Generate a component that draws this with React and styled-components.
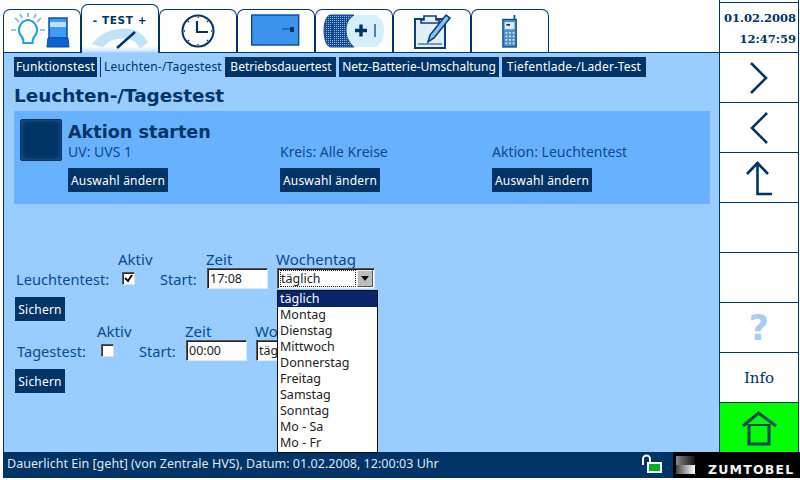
import React from "react";
import styled, { createGlobalStyle } from "styled-components";

const Global = createGlobalStyle`
  html, body { margin: 0; padding: 0; background: #fff; }
  body { font-family: "Noto Sans", "DejaVu Sans", sans-serif; }
`;
const Screen = styled.div`
  width: 800px; height: 480px; display: grid; grid-template-columns: 719px 80px; grid-template-rows: 452px 26px;
  background: #fff; overflow: hidden; position: relative;
`;
const Left = styled.div`display: flex; flex-direction: column; height: 452px; min-width: 0;`;
const TabBar = styled.div`display: flex; align-items: flex-end; height: 52px; padding-left: 3px; box-sizing: border-box;`;
const Tab = styled.div`
  width: 78px; height: ${p => (p.$active ? 49 : 43)}px; box-sizing: border-box; flex: none;
  border: 1px solid #003366; border-bottom: 0; border-radius: 7px 7px 0 0;
  display: flex; align-items: center; justify-content: center;
  background: ${p => (p.$active ? "linear-gradient(#fff 86%, #cfe6ff 96%, #99ccff)" : "#fff")};
  position: relative; z-index: 1;
  margin-bottom: ${p => (p.$active ? -1 : 0)}px;
`;
const Main = styled.main`
  flex: 1; background: #99ccff; margin-left: 3px; border-left: 1px solid #003366; border-top: 1px solid #003366;
  padding: 4px 9px 0 10px; box-sizing: border-box; position: relative;
`;
const SubTabs = styled.div`display: flex; height: 20px;`;
const SubTab = styled.div`
  width: ${p => p.$w}px; margin-right: ${p => p.$gap ?? 3}px; flex: none; text-align: center;
  height: 20px; line-height: 19px; box-sizing: border-box; font-size: 12px; white-space: nowrap;
  letter-spacing: ${p => p.$ls ?? 0.2}px;
  background: ${p => (p.$active ? "transparent" : "#003366")};
  color: ${p => (p.$active ? "#003366" : "#fff")};
  ${p => p.$active && "border: 1px solid #003366; border-bottom: 0; border-top: 0;"}
`;
const Title = styled.h1`
  margin: 7px 0 0; font: bold 18.4px/23px "DejaVu Sans", sans-serif; color: #003366; height: 27px;
`;
const Panel = styled.section`
  background: #66b2ff; width: 696px; height: 93px; padding: 8px 6px 0; box-sizing: border-box; display: flex;
`;
const BigButton = styled.div`
  width: 42px; height: 42px; flex: none; box-sizing: border-box; border: 1px solid #003366; border-radius: 2px;
  background: #003366; box-shadow: inset 0 0 5px #2f6298;
  margin-right: 6px;
`;
const PanelBody = styled.div`flex: 1; display: flex; flex-direction: column;`;
const PanelTitle = styled.div`font: bold 17.6px/26px "DejaVu Sans", sans-serif; color: #003366; height: 24px;`;
const Columns = styled.div`display: grid; grid-template-columns: 212px 212px 1fr;`;
const Col = styled.div`display: flex; flex-direction: column; align-items: flex-start; gap: 7px;`;
const Muted = styled.div`font-size: 14px; line-height: 18px; color: #0a4a90;`;
const DarkButton = styled.div`
  background: #003366; color: #fff; font-size: 12px; height: 24px; line-height: 25px; width: ${p => p.$w}px; text-align: center;
  letter-spacing: 0.2px; white-space: nowrap; box-sizing: border-box;
`;
const Forms = styled.div`margin-top: 45px; display: flex; flex-direction: column;`;
const FormRow = styled.div`display: flex; align-items: flex-end; height: 40px; margin-left: ${p => p.$x}px;`;
const Cell = styled.div`
  display: flex; flex-direction: column; width: ${p => p.$w}px; flex: none; font-size: 14.6px; color: #0a4a90;
`;
const Head = styled.div`height: 19px; line-height: 20px; font-size: 15px; padding-left: ${p => p.$x || 0}px;`;
const Field = styled.div`height: 21px; line-height: 21px; padding-left: ${p => p.$x || 0}px; display: flex; align-items: center;`;
const FieldText = styled.span`margin-top: 2px; white-space: nowrap;`;
const Check = styled.span`
  width: 13px; height: 13px; box-sizing: border-box; background: #fff;
  border: 1px solid; border-color: #555 #ddd #ddd #555; box-shadow: inset 1px 1px 0 #333;
  display: flex; align-items: center; justify-content: center;
`;
const Input = styled.div`
  width: 61px; height: 21px; box-sizing: border-box; background: #fff; color: #222; font-size: 12.5px; line-height: 19px; padding-left: 2px;
  border: 1px solid; border-color: #555 #d8e8f8 #d8e8f8 #555; box-shadow: inset 1px 1px 0 #222;
`;
const Select = styled.div`
  width: 98px; height: 21px; box-sizing: border-box; background: #fff; color: #222; font-size: 12.5px; line-height: 19px;
  border: 1px solid; border-color: #555 #d8e8f8 #d8e8f8 #555; box-shadow: inset 1px 1px 0 #222; padding-left: 2px;
  display: flex; justify-content: space-between;
`;
const SelectText = styled.span`
  outline: 1px dotted #222; outline-offset: -1px; flex: 1; padding-left: 1px; margin: 1px 0; line-height: 17px;
`;
const Arrow = styled.span`
  width: 16px; height: 17px; margin: 1px; background: #bdbdbd; box-sizing: border-box; flex: none;
  border: 1px solid; border-color: #eee #555 #555 #eee; display: flex; align-items: center; justify-content: center;
`;
const SaveRow = styled.div`margin: 8px 0 0 1px; height: 24px;`;
const Dropdown = styled.ul`
  position: absolute; left: 273px; top: 237px; width: 101px; height: 163px; margin: 0; padding: 0; list-style: none;
  background: #fff; border: 1px solid #111; box-sizing: border-box; z-index: 3;
`;
const Option = styled.li`
  height: 16px; line-height: 16px; font-size: 12.5px; padding-left: 2px; color: ${p => (p.$sel ? "#fff" : "#222")};
  background: ${p => (p.$sel ? "#0a246a" : "transparent")};
`;
const Right = styled.aside`
  grid-row: 1; grid-column: 2; display: flex; flex-direction: column; padding-top: 2px; box-sizing: border-box;
  width: 80px; height: 452px; border-left: 1px solid #003366; border-right: 1px solid #003366; background: #fff;
`;
const Side = styled.div`
  height: 50px; flex: none; box-sizing: border-box; border-top: 1px solid #003366;
  display: flex; align-items: center; justify-content: center;
  background: ${p => p.$bg || "#fff"};
`;
const DateBox = styled(Side)`
  flex-direction: column; align-items: flex-end; padding: 2px 2px 0 0; font: bold 11.5px/21px "DejaVu Serif", serif; color: #003366;
`;
const InfoLabel = styled.span`font: 500 15px "DejaVu Serif", serif; color: #003366;`;
const Question = styled.span`font: bold 35px/36px "DejaVu Sans", sans-serif; color: #a9cdf2;`;
const Status = styled.footer`
  grid-column: 1 / 3; height: 26px; margin-left: 3px; background: #003366; display: flex; align-items: center; color: #dce8f4;
  font-size: 12.55px; padding-left: 4px; width: 797px; box-sizing: border-box;
`;
const StatusText = styled.span`flex: 1; margin-bottom: 3px;`;
const Lock = styled.span`display: flex; margin-right: 9px;`;
const Brand = styled.div`
  width: 127px; height: 26px; background: #000; display: flex; align-items: center; box-sizing: border-box;
`;
const BrandMark = styled.span`
  width: 19px; height: 18px; margin-left: 3px; display: block;
  background:
    linear-gradient(90deg, #888, #111) top / 100% 50% no-repeat,
    linear-gradient(90deg, #444, #fff) bottom / 100% 50% no-repeat;
`;
const BrandName = styled.span`
  font: bold 12.5px "DejaVu Sans", sans-serif; letter-spacing: 1.2px; color: #f2f2f2; margin: 8px 0 0 13px;
`;

const navy = "#003366";
const Bulb = () => (
  <svg width="64" height="36" viewBox="0 0 64 36">
    <g fill="none" stroke="#22a0dc" strokeWidth="2.2">
      <path d="M18 7a10 10 0 0 1 6 17c-1.500 2-1.500 3-1.500 6h-9c0-3 0-4-1.500-6a10 10 0 0 1 6-17z" fill="#fff" />
    </g>
    <path d="M1 17h5M30 17h5M5 5l4 4M31 5l-4 4M18 0v4M10 1l2 4M26 1l-2 4" stroke="#7fb5cc" strokeWidth="1.7" />
    <path d="M39 5h18v20h-18z" fill="#3d9cf5" stroke="#0a4ea8" strokeWidth="1.5" />
    <path d="M40 9h16v5h-16z" fill="#bfe0f8" />
    <path d="M38 25h20l1 9h-22z" fill="#0f63d0" stroke="#0a4ea8" />
  </svg>
);
const Gauge = () => (
  <svg width="64" height="42" viewBox="0 0 64 42">
    <text x="32" y="16" textAnchor="middle" fontFamily="DejaVu Sans, sans-serif" fontWeight="700" fontSize="10.5" fill="#003366" letterSpacing="0.6">- TEST +</text>
    <path d="M4 36C12 25 24 20.500 36 20.500s19 5 24 14l-8 6c-4-7-9-10-16-10-11 0-16 3-21 9z" fill="#c2e3f7" />
    <path d="M29 40l18-16" stroke="#003366" strokeWidth="2.4" />
  </svg>
);
const Clock = () => (
  <svg width="36" height="36" viewBox="0 0 36 36" fill="none" stroke={navy}>
    <circle cx="18" cy="18" r="15.500" strokeWidth="2" />
    <path d="M17 8v11h11" strokeWidth="2.2" />
    <path d="M18 4v1M18 31v1M4 18h1M31 18h1M8 8l1 1M28 8l-1 1M8 28l1-1M28 28l-1-1" strokeWidth="1.4" />
  </svg>
);
const Screenicon = () => (
  <svg width="50" height="34" viewBox="0 0 50 34">
    <rect x="0.700" y="1" width="47" height="30" fill="#3d94ec" stroke="#0b4a9a" strokeWidth="1.4" />
    <path d="M31 15h11" stroke="#1b5c9c" strokeWidth="1.4" />
    <rect x="39" y="13" width="4" height="5" fill={navy} />
  </svg>
);
const Battery = () => (
  <svg width="64" height="34" viewBox="0 0 64 34">
    <defs>
      <pattern id="dots" width="2" height="2" patternUnits="userSpaceOnUse">
        <rect width="2" height="2" fill="#144a8c" /><rect width="1" height="1" fill="#8ab8e8" />
      </pattern>
    </defs>
    <path d="M8 1h46c2 0 3 2 3 4h2c4 4 4 20 0 24h-2c0 2-1 4-3 4H8C0 30 0 3 8 1z" fill="#d6f0fb" />
    <path d="M8 1h24c-6 4-8 9-8 15s2 12 8 17H8C0 30 0 3 8 1z" fill="url(#dots)" stroke="#144a8c" />
    <path d="M10 9v16" stroke="#144a8c" strokeWidth="2" />
    <path d="M33 16.500h12M39 10.500v12" stroke={navy} strokeWidth="3.400" />
    <path d="M53 10v13" stroke={navy} strokeWidth="1.200" />
  </svg>
);
const Pad = () => (
  <svg width="38" height="38" viewBox="0 0 38 38" fill="none">
    <rect x="2" y="7" width="30" height="29" fill="#dff0fb" stroke="#0e3f7a" strokeWidth="2" />
    <path d="M5 32h24" stroke="#0e3f7a" />
    <path d="M11 8V4h12v4h3v3H8V8z" fill="#dff0fb" stroke="#0e3f7a" strokeWidth="1.6" />
    <path d="M15 30l2-7L33 3l4 3-16 20z" fill="#8fc0ea" stroke="#0e3f7a" strokeWidth="1.6" />
  </svg>
);
const Phone = () => (
  <svg width="16" height="36" viewBox="0 0 18 38">
    <path d="M13 1h2v6h-2z" fill="#114d8c" />
    <rect x="1" y="6" width="15" height="31" fill="#4d8ecb" stroke="#114d8c" strokeWidth="1.500" />
    <rect x="3" y="9" width="11" height="8" fill="#dceefb" />
    <path d="M5 11h4v2H5z" fill={navy} />
    <path d="M4 20h2v2H4zM8 20h2v2H8zM12 20h2v2h-2zM4 24h2v2H4zM8 24h2v2H8zM12 24h2v2h-2zM4 28h2v2H4zM8 28h2v2H8zM12 28h2v2h-2zM4 32h2v2H4zM8 32h2v2H8zM12 32h2v2h-2z" fill="#d4e9fa" />
  </svg>
);
const Chevron = ({ d, w = 24, h = 36 }) => (
  <svg width={w} height={h} viewBox={`0 0 ${w} ${h}`} fill="none" stroke={navy} strokeWidth="2.600"><path d={d} /></svg>
);
const Home = () => (
  <svg width="36" height="36" viewBox="0 0 36 36" fill="none" stroke="#004455" strokeWidth="3">
    <path d="M2 16L17.500 3 35 16" /><path d="M8 14v20h20V14" /><path d="M8 15h20" strokeWidth="2" />
  </svg>
);

const Wk = ["täglich", "Montag", "Dienstag", "Mittwoch", "Donnerstag", "Freitag", "Samstag", "Sonntag", "Mo - Sa", "Mo - Fr"];

const Row = ({ label, lw, x, checked, time, sel }) => (
  <FormRow $x={x}>
    <Cell $w={lw}><Head /><Field><FieldText>{label}</FieldText></Field></Cell>
    <Cell $w={42}>
      <Head>Aktiv</Head>
      <Field $x={4}>
        <Check>{checked && <svg width="9" height="9" viewBox="0 0 9 9"><path d="M1 4l3 3 4-6" fill="none" stroke="#111" strokeWidth="2" /></svg>}</Check>
      </Field>
    </Cell>
    <Cell $w={46}><Head /><Field><FieldText>Start:</FieldText></Field></Cell>
    <Cell $w={70}>
      <Head>Zeit</Head>
      <Field $x={1}><Input>{time}</Input></Field>
    </Cell>
    <Cell $w={110}>
      <Head>Wochentag</Head>
      <Field $x={1}>
        <Select>
          {sel ? <SelectText>täglich</SelectText> : <span>täglich</span>}
          <Arrow><svg width="8" height="5" viewBox="0 0 8 5"><path d="M0 0h8L4 5z" fill="#111" /></svg></Arrow>
        </Select>
      </Field>
    </Cell>
  </FormRow>
);

export default function App() {
  return (
    <Screen>
      <Global />
      <Left>
        <TabBar>
          <Tab><Bulb /></Tab>
          <Tab $active><Gauge /></Tab>
          <Tab><Clock /></Tab>
          <Tab><Screenicon /></Tab>
          <Tab><Battery /></Tab>
          <Tab><Pad /></Tab>
          <Tab><Phone /></Tab>
        </TabBar>
        <Main>
          <SubTabs>
            <SubTab $w={83}>Funktionstest</SubTab>
            <SubTab $active $w={126} $gap={0}>Leuchten-/Tagestest</SubTab>
            <SubTab $w={110} $ls={0}>Betriebsdauertest</SubTab>
            <SubTab $w={160} $ls={0}>Netz-Batterie-Umschaltung</SubTab>
            <SubTab $w={144}>Tiefentlade-/Lader-Test</SubTab>
          </SubTabs>
          <Title>Leuchten-/Tagestest</Title>
          <Panel>
            <BigButton />
            <PanelBody>
              <PanelTitle>Aktion starten</PanelTitle>
              <Columns>
                <Col><Muted>UV: UVS 1</Muted><DarkButton $w={100}>Auswahl ändern</DarkButton></Col>
                <Col><Muted>Kreis: Alle Kreise</Muted><DarkButton $w={100}>Auswahl ändern</DarkButton></Col>
                <Col><Muted>Aktion: Leuchtentest</Muted><DarkButton $w={100}>Auswahl ändern</DarkButton></Col>
              </Columns>
            </PanelBody>
          </Panel>
          <Forms>
            <Row label="Leuchtentest:" lw={102} x={2} checked time="17:08" sel />
            <SaveRow><DarkButton $w={50}>Sichern</DarkButton></SaveRow>
            <Row label="Tagestest:" lw={80} x={3} time="00:00" />
            <SaveRow><DarkButton $w={50}>Sichern</DarkButton></SaveRow>
          </Forms>
          <Dropdown>
            {Wk.map((w, i) => <Option key={w} $sel={i === 0}>{w}</Option>)}
          </Dropdown>
        </Main>
      </Left>
      <Right>
        <DateBox><span>01.02.2008</span><span>12:47:59</span></DateBox>
        <Side><Chevron d="M4 3l15 15L4 33" /></Side>
        <Side><Chevron d="M20 3L5 18l15 15" /></Side>
        <Side><Chevron w={28} d="M2 14L12.500 3 23 14M12.500 3v31h14.500" /></Side>
        <Side />
        <Side />
        <Side><Question>?</Question></Side>
        <Side><InfoLabel>Info</InfoLabel></Side>
        <Side $bg="#00ff00"><Home /></Side>
      </Right>
      <Status>
        <StatusText>Dauerlicht Ein [geht] (von Zentrale HVS), Datum: 01.02.2008, 12:00:03 Uhr</StatusText>
        <Lock>
          <svg width="22" height="22" viewBox="0 0 22 22">
            <path d="M1 11V5a3.500 3.500 0 0 1 7 0v4" fill="none" stroke="#fff" strokeWidth="2" />
            <rect x="5" y="8" width="15" height="11" fill="#fff" />
            <rect x="7" y="10" width="11" height="7" fill="#00b020" />
          </svg>
        </Lock>
        <Brand><BrandMark /><BrandName>ZUMTOBEL</BrandName></Brand>
      </Status>
    </Screen>
  );
}
